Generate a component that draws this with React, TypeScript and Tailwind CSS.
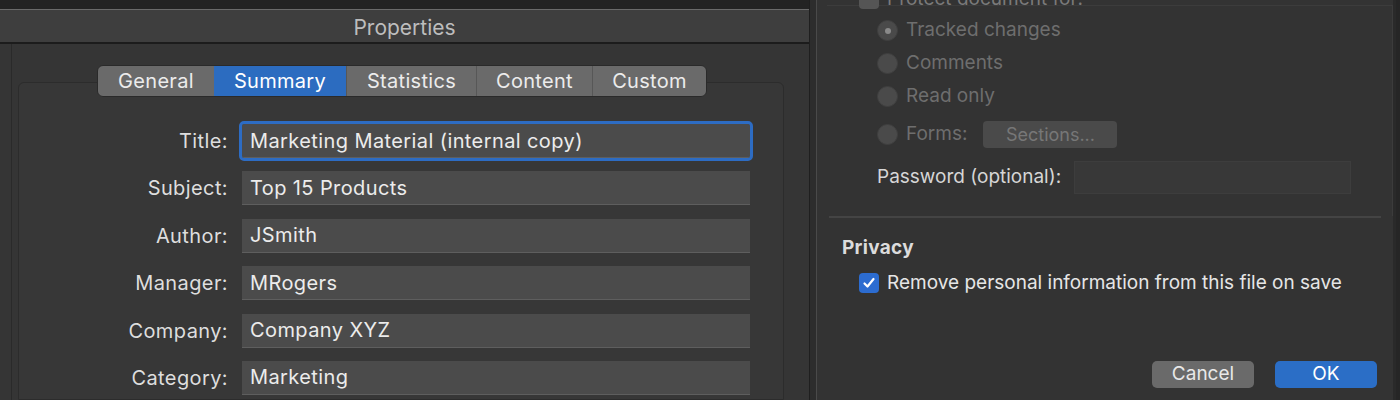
import React from "react";

const font = { fontFamily: "Inter, 'Noto Sans', 'Liberation Sans', sans-serif" };

const fields: [string, string][] = [
  ["Title:", "Marketing Material (internal copy)"],
  ["Subject:", "Top 15 Products"],
  ["Author:", "JSmith"],
  ["Manager:", "MRogers"],
  ["Company:", "Company XYZ"],
  ["Category:", "Marketing"],
];

const tabs = ["General", "Summary", "Statistics", "Content", "Custom"];
const tabW = [116, 132, 130, 116, 114];

function Radio({ label, checked }: { label: string; checked?: boolean }) {
  return (
    <div className="flex items-center h-[33px]">
      <div className="w-[21px] h-[21px] rounded-full bg-[#4a4a4a] border border-[#404040] flex items-center justify-center">
        {checked && <div className="w-[6px] h-[6px] rounded-full bg-[#8a8a8a]" />}
      </div>
      <span className="ml-[8px] text-[19px] text-[#6e6e6e]">{label}</span>
    </div>
  );
}

export default function App() {
  return (
    <div style={font} className="w-[1400px] h-[400px] flex bg-[#262626] overflow-hidden">
      {/* Left window */}
      <div className="w-[810px] h-[400px] flex flex-col bg-[#353535] border-r border-[#1f1f1f]">
        <div className="h-[10px] bg-[#232323] border-b border-[#6a6a6a]" />
        <div className="h-[34px] bg-[#3e3e3e] flex items-center justify-center border-b-[2px] border-[#1c1c1c]">
          <span className="text-[21px] text-[#bdbdbd] pt-[3px]">Properties</span>
        </div>
        <div className="flex-1 relative pt-[38px] border-l border-[#2a2a2a] ml-[11px]">
          <div className="h-full ml-[6px] rounded-t-[6px] border border-[#2c2c2c] bg-[#373737] w-[766px]" />
          {/* tabs */}
          <div className="absolute left-[85px] top-[21px] flex h-[32px] rounded-[6px] overflow-hidden bg-[#6a6a6a] border border-[#2a2a2a]">
            {tabs.map((t, i) => (
              <div
                key={t}
                style={{ width: tabW[i] }}
                className={
                  "flex items-center justify-center text-[20px] tracking-[0.3px] " +
                  (i === 1
                    ? "bg-[#2c6cc0] text-white"
                    : "text-[#ececec] " + (i > 1 ? "border-l border-[#575757]" : ""))
                }
              >
                {t}
              </div>
            ))}
          </div>
          {/* fields */}
          <div className="absolute left-0 top-[80px] flex flex-col gap-[13.4px]">
            {fields.map(([l, v], i) => (
              <div key={l} className="flex items-center h-[34px]">
                <div className="w-[216px] text-right text-[20px] tracking-[0.4px] text-[#dedede]">{l}</div>
                <div
                  className={
                    "ml-[14px] w-[508px] h-[34px] bg-[#4b4b4b] flex items-center pl-[8px] text-[20px] tracking-[0.4px] text-[#ececec] border-b border-[#5e5e5e] " +
                    (i === 0 ? "outline-[3px] outline outline-[#2d6cc3] rounded-[2px]" : "")
                  }
                >
                  {v}
                </div>
              </div>
            ))}
          </div>
        </div>
      </div>
      {/* gap */}
      <div className="w-[7px] bg-[#2d2d2d] border-r border-[#4a4a4a]" />
      {/* Right panel */}
      <div className="w-[579px] h-[400px] bg-[#333333] relative overflow-hidden border-r-[3px] border-[#2a2a2a]">
        <div className="absolute left-[10px] top-[5px] w-[566px] h-[211px] border-t border-r border-[#3c3c3c]" />
        {/* cut-off top row */}
        <div className="absolute left-[42px] -top-[15px] flex items-center">
          <div className="w-[20px] h-[20px] rounded-[4px] bg-[#555555]" />
          <span className="ml-[8px] text-[19px] text-[#7a7a7a]">Protect document for:</span>
        </div>
        <div className="flex flex-col pl-[60px] pt-[14px]">
          <Radio label="Tracked changes" checked />
          <Radio label="Comments" />
          <Radio label="Read only" />
          <div className="flex items-center h-[33px] mt-[5px]">
            <div className="w-[21px] h-[21px] rounded-full bg-[#4a4a4a] border border-[#404040]" />
            <span className="ml-[8px] text-[19px] text-[#6e6e6e]">Forms:</span>
            <div className="ml-[16px] w-[134px] h-[27px] rounded-[4px] bg-[#4a4a4a] flex items-center justify-center text-[18px] text-[#777777]">
              Sections...
            </div>
          </div>
        </div>
        <div className="flex items-center pl-[60px] mt-[10px]">
          <span className="text-[19px] text-[#d6d6d6] w-[197px]">Password (optional):</span>
          <div className="w-[277px] h-[33px] bg-[#383838] border border-[#3d3d3d]" />
        </div>
        <div className="mx-[12px] mt-[22px] h-[2px] bg-[#444444]" />
        <div className="pl-[25px] mt-[16px] text-[19px] font-bold tracking-[0.3px] text-[#dcdcdc]">Privacy</div>
        <div className="flex items-center pl-[42px] mt-[6px]">
          <div className="w-[20px] h-[20px] rounded-[4px] bg-[#2c6cd0] flex items-center justify-center">
            <svg width="14" height="14" viewBox="0 0 14 14">
              <path d="M2.5 7.5 L5.5 10.5 L11.5 3" stroke="white" strokeWidth="2.2" fill="none" strokeLinecap="round" strokeLinejoin="round" />
            </svg>
          </div>
          <span className="ml-[8px] text-[19px] text-[#e6e6e6]">Remove personal information from this file on save</span>
        </div>
        <div className="absolute left-[335px] top-[361px] flex gap-[21px]">
          <div className="w-[102px] h-[27px] rounded-[5px] bg-[#6a6a6a] flex items-center justify-center text-[19px] text-[#e8e8e8]">
            Cancel
          </div>
          <div className="w-[102px] h-[27px] rounded-[5px] bg-[#2b6ec6] flex items-center justify-center text-[19px] text-white">
            OK
          </div>
        </div>
      </div>
    </div>
  );
}
